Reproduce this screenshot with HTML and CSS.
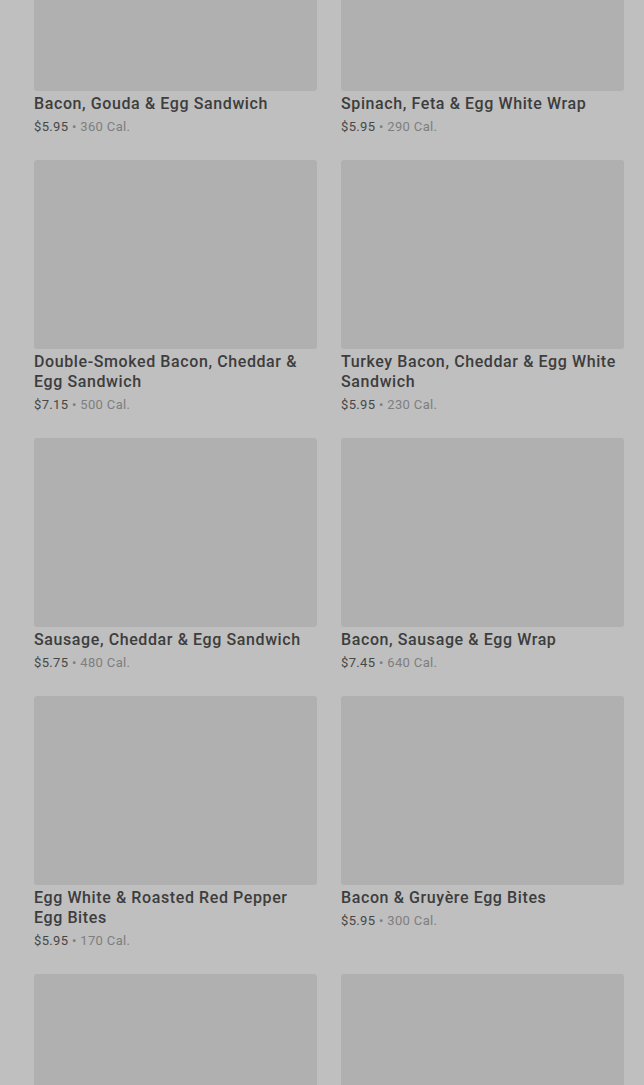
FILE: index.html
```html
<!DOCTYPE html>
<html lang="en">
<head>
<meta charset="utf-8">
<title>Breakfast</title>
<link rel="stylesheet" href="styles.css">
</head>
<body>
<main class="page">
  <div class="grid">
    <div class="card"><div class="thumb"></div><div class="name">Bacon, Gouda &amp; Egg Sandwich</div><div class="meta"><span class="price">$5.95</span> <span class="cal">• 360 Cal.</span></div></div>
    <div class="card"><div class="thumb"></div><div class="name">Spinach, Feta &amp; Egg White Wrap</div><div class="meta"><span class="price">$5.95</span> <span class="cal">• 290 Cal.</span></div></div>
    <div class="card"><div class="thumb"></div><div class="name">Double-Smoked Bacon, Cheddar &amp; Egg Sandwich</div><div class="meta"><span class="price">$7.15</span> <span class="cal">• 500 Cal.</span></div></div>
    <div class="card"><div class="thumb"></div><div class="name">Turkey Bacon, Cheddar &amp; Egg White Sandwich</div><div class="meta"><span class="price">$5.95</span> <span class="cal">• 230 Cal.</span></div></div>
    <div class="card"><div class="thumb"></div><div class="name">Sausage, Cheddar &amp; Egg Sandwich</div><div class="meta"><span class="price">$5.75</span> <span class="cal">• 480 Cal.</span></div></div>
    <div class="card"><div class="thumb"></div><div class="name">Bacon, Sausage &amp; Egg Wrap</div><div class="meta"><span class="price">$7.45</span> <span class="cal">• 640 Cal.</span></div></div>
    <div class="card"><div class="thumb"></div><div class="name">Egg White &amp; Roasted Red Pepper Egg Bites</div><div class="meta"><span class="price">$5.95</span> <span class="cal">• 170 Cal.</span></div></div>
    <div class="card"><div class="thumb"></div><div class="name">Bacon &amp; Gruyère Egg Bites</div><div class="meta"><span class="price">$5.95</span> <span class="cal">• 300 Cal.</span></div></div>
    <div class="card"><div class="thumb"></div></div>
    <div class="card"><div class="thumb"></div></div>
  </div>
</main>
</body>
</html>
```

FILE: styles.css
```css
html, body {
  margin: 0;
  padding: 0;
  height: 100%;
  overflow: hidden;
  background: #bfbfbf;
}

body {
  font-family: Roboto, "Liberation Sans", sans-serif;
  color: #3b3b3b;
}

.page {
  padding: 0 20px 0 34px;
}

.grid {
  display: grid;
  grid-template-columns: 283px 283px;
  column-gap: 24px;
  row-gap: 24.33px;
  margin-top: -98px;
}

.card {
  display: flex;
  flex-direction: column;
}

.thumb {
  aspect-ratio: 3 / 2;
  background: #b0b0b0;
  border-radius: 3px;
}

.name {
  margin-top: 3px;
  font-size: 16px;
  line-height: 20px;
  font-weight: 500;
  color: #3d3d3d;
  letter-spacing: 0.6px;
}

.meta {
  margin-top: 4px;
  font-size: 13px;
  line-height: 18px;
  letter-spacing: 0.35px;
}

.price {
  color: #474747;
}

.cal {
  color: #7e7e7e;
}
```
